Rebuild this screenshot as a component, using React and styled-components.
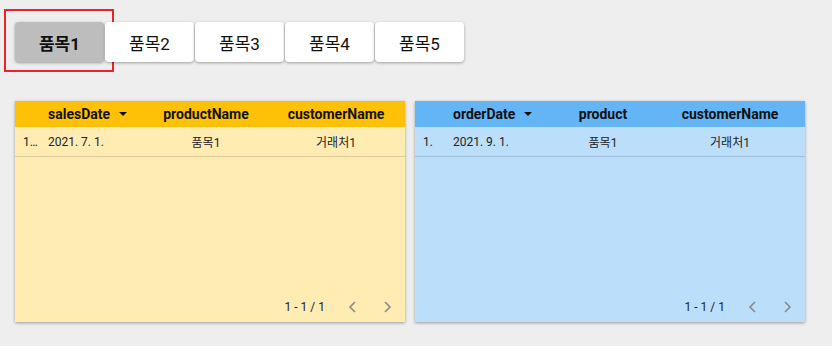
import styled, { createGlobalStyle } from "styled-components";

const GlobalStyle = createGlobalStyle`
    body {
        margin: 0;
        background-color: #eeeeee;
        font-family: Roboto, "Noto Sans CJK KR", sans-serif;
    }
`

const Page = styled.div`
    padding: 22px 15px;
    width: 832px;
    height: 346px;
    box-sizing: border-box;
`
const ButtonRow = styled.div`
    display: flex;
    gap: 1px;
`
const ButtonWrap = styled.div`
    position: relative;
`
const Highlight = styled.div`
    position: absolute;
    top: -13px;
    left: -11px;
    right: -10px;
    bottom: -10px;
    border: 2px solid #e8242c;
    pointer-events: none;
`
const ItemButton = styled.button`
    width: 89px;
    height: 40px;
    border: none;
    border-radius: 4px;
    background-color: ${props => props.active ? "#bdbdbd" : "#fff"};
    box-shadow: 0px 1px 3px rgba(0, 0, 0, 0.35);
    font-family: Roboto, "Noto Sans CJK KR", sans-serif;
    font-size: 17px;
    font-weight: ${props => props.active ? 700 : 400};
    color: #111;
    padding: 0;
`
const Tables = styled.div`
    display: flex;
    gap: 10px;
    margin-top: 39px;
`
const Card = styled.div`
    width: 390px;
    height: 221px;
    display: flex;
    flex-direction: column;
    background-color: ${props => props.body};
    box-shadow: 0px 1px 3px rgba(0, 0, 0, 0.35);
`
const Row = styled.div`
    display: grid;
    grid-template-columns: ${props => props.cols};
    align-items: center;
`
const HeaderRow = styled(Row)`
    height: 26px;
    background-color: ${props => props.head};
    font-size: 14px;
    font-weight: 700;
    color: #111;
`
const BodyRow = styled(Row)`
    height: 29px;
    border-bottom: 1px solid rgba(0, 0, 0, 0.14);
    font-size: 12px;
    color: #222;
`
const Cell = styled.div`
    padding-left: ${props => props.left ? "3px" : "0"};
    white-space: nowrap;
    overflow: hidden;
    display: flex;
    align-items: center;
    justify-content: ${props => props.left ? "flex-start" : "center"};
`
const NumCell = styled(Cell)`
    padding-left: 8px;
`
const Spacer = styled.div`
    flex: 1;
`
const Footer = styled.div`
    display: flex;
    align-items: center;
    justify-content: flex-end;
    height: 28px;
    margin-bottom: 1px;
    font-size: 12px;
    color: #222;
`
const PageInfo = styled.span`
    margin-right: 10px;
`
const PageArrow = styled.span`
    width: 35px;
    display: flex;
    justify-content: center;
`

function SortArrow() {
    return (
        <svg width="8" height="4" viewBox="0 0 8 4" style={{ marginLeft: 9 }}>
            <path d="M0 0 L8 0 L4 4 Z" fill="#111" />
        </svg>
    )
}

function Chevron({ dir }) {
    const d = dir === "left" ? "M7 1 L2 6 L7 11" : "M2 1 L7 6 L2 11"
    return (
        <svg width="9" height="12" viewBox="0 0 9 12">
            <path d={d} fill="none" stroke="#8a8a8a" strokeWidth="1.6" />
        </svg>
    )
}

function DataTable({ head, body, cols, num, dateKey, productKey, date }) {
    return (
        <Card body={body}>
            <HeaderRow head={head} cols={cols}>
                <div />
                <Cell left>{dateKey}<SortArrow /></Cell>
                <Cell>{productKey}</Cell>
                <Cell>customerName</Cell>
            </HeaderRow>
            <BodyRow cols={cols}>
                <NumCell left>{num}</NumCell>
                <Cell left>{date}</Cell>
                <Cell>품목1</Cell>
                <Cell>거래처1</Cell>
            </BodyRow>
            <Spacer />
            <Footer>
                <PageInfo>1 - 1 / 1</PageInfo>
                <PageArrow><Chevron dir="left" /></PageArrow>
                <PageArrow><Chevron dir="right" /></PageArrow>
            </Footer>
        </Card>
    )
}

export default function App() {
    const items = ["품목1", "품목2", "품목3", "품목4", "품목5"]
    return (
        <Page>
            <GlobalStyle />
            <ButtonRow>
                {items.map((item, i) => (
                    <ButtonWrap key={item}>
                        <ItemButton active={i === 0}>{item}</ItemButton>
                        {i === 0 && <Highlight />}
                    </ButtonWrap>
                ))}
            </ButtonRow>
            <Tables>
                <DataTable
                    head="#ffc107"
                    body="#ffecb3"
                    cols="30px 100px 122px 138px"
                    num="1…"
                    dateKey="salesDate"
                    productKey="productName"
                    date="2021. 7. 1."
                />
                <DataTable
                    head="#64b5f6"
                    body="#bbdefb"
                    cols="35px 98px 110px 144px"
                    num="1."
                    dateKey="orderDate"
                    productKey="product"
                    date="2021. 9. 1."
                />
            </Tables>
        </Page>
    )
}
